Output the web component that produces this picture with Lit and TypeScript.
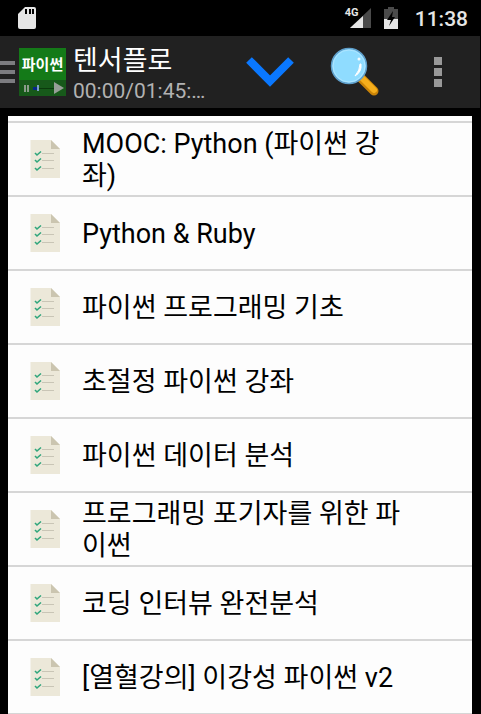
import { LitElement, html, css, svg } from "lit";
import { customElement, property } from "lit/decorators.js";

const fontStack = css`Roboto, "Noto Sans CJK KR", sans-serif`;

@customElement("status-bar")
class StatusBar extends LitElement {
  static styles = css`
    :host {
      display: flex;
      align-items: center;
      height: 36px;
      padding: 0 13px 0 18px;
      box-sizing: border-box;
      background: #000;
      color: #e6e6e6;
      font-family: ${fontStack};
    }
    .spacer {
      flex: 1;
    }
    .network {
      display: flex;
      align-items: flex-start;
      height: 22px;
    }
    .label {
      font-size: 11px;
      line-height: 12px;
      font-weight: 700;
      width: 5px;
      white-space: nowrap;
    }
    .battery {
      margin: 0 17px 0 13px;
    }
    .time {
      padding-top: 2px;
      font-size: 21px;
      line-height: 34px;
      font-weight: 500;
    }
    svg {
      display: block;
    }
  `;

  render() {
    return html`
      <svg width="18" height="22" viewBox="0 0 18 22" aria-hidden="true">
        <path d="M7 0H16Q18 0 18 2V20Q18 22 16 22H2Q0 22 0 20V7Z" fill="#e6e6e6" />
        <path d="M7 2h2v5h-2zM11 2h2v5h-2zM14 2h2v5h-2z" fill="#000" />
      </svg>
      <span class="spacer"></span>
      <span class="network">
        <span class="label">4G</span>
        <svg width="21" height="22" viewBox="0 0 21 22" aria-hidden="true">
          <path d="M21 1V21H0Z" fill="#4a4a4a" />
          <path d="M13 9V21H0Z" fill="#e6e6e6" />
        </svg>
      </span>
      <svg class="battery" width="14" height="22" viewBox="0 0 14 22" aria-hidden="true">
        <path d="M4 0h6v2h4v20H0V2h4z" fill="#4a4a4a" />
        <path d="M0 12h14v10H0z" fill="#e6e6e6" />
        <path d="M9 4L3 13h4l-2 6l6-9H8z" fill="#000" />
      </svg>
      <span class="time">11:38</span>
    `;
  }
}

@customElement("player-bar")
class PlayerBar extends LitElement {
  @property() heading = "";
  @property() progress = "";

  static styles = css`
    :host {
      display: flex;
      align-items: center;
      height: 72px;
      margin-right: 1px;
      padding-right: 26px;
      box-sizing: border-box;
      background: #212121;
      font-family: ${fontStack};
    }
    button {
      display: flex;
      padding: 0;
      border: 0;
      background: none;
      cursor: pointer;
    }
    svg {
      display: block;
    }
    .cover {
      display: flex;
      flex-direction: column;
      width: 47px;
      height: 48px;
      margin: 0 7px 0 4px;
      background: #147a18;
    }
    .cover-title {
      height: 32px;
      color: #fff;
      font-size: 15px;
      line-height: 34px;
      font-weight: 700;
      text-align: center;
      white-space: nowrap;
    }
    .info {
      width: 136px;
      padding-top: 4px;
      white-space: nowrap;
    }
    h1 {
      margin: 0;
      color: #fff;
      font-size: 27px;
      line-height: 34px;
      font-weight: 400;
    }
    .progress {
      color: #b2b2b2;
      font-size: 21px;
      line-height: 26px;
    }
    .actions {
      display: flex;
      flex: 1;
      align-items: center;
      justify-content: space-between;
      margin-left: 37px;
    }
    .more {
      padding: 0 12px 0 18px;
    }
  `;

  render() {
    return html`
      <button aria-label="메뉴">
        <svg width="15" height="24" viewBox="0 0 15 24">
          <path d="M0 1h15v4H0zM0 10h15v4H0zM0 19h15v4H0z" fill="#7c7c80" />
        </svg>
      </button>
      <div class="cover">
        <span class="cover-title">파이썬</span>
        <svg width="47" height="16" viewBox="0 0 47 16" aria-hidden="true">
          <path d="M0 0h47v16H0z" fill="#17591a" />
          <path d="M5 5h2v7h-2zM8 5h2v7h-2z" fill="#8b9b8b" />
          <path d="M14 8h21v1H14z" fill="#0b3a0c" />
          <path d="M14 7h5v3h-5z" fill="#06268c" />
          <path d="M18 5h2v6h-2z" fill="#7b9fc4" />
          <path d="M35 2L45 8L35 14Z" fill="#979e97" />
        </svg>
      </div>
      <div class="info">
        <h1>${this.heading}</h1>
        <div class="progress">${this.progress}</div>
      </div>
      <div class="actions">
        <button aria-label="펼치기">
          <svg width="48" height="30" viewBox="0 0 48 30">
            <path d="M3 3L24 24L45 3" fill="none" stroke="#0a78ff" stroke-width="8" />
          </svg>
        </button>
        <button aria-label="검색">
          <svg width="50" height="50" viewBox="0 0 50 50">
            <path d="M31 31L44 44" stroke="#c98308" stroke-width="9" stroke-linecap="round" />
            <path d="M31 30L44 43" stroke="#f5ae1c" stroke-width="6" stroke-linecap="round" />
            <circle cx="19" cy="19" r="17.5" fill="#8fdcff" stroke="#5f9fcb" stroke-width="1.5" />
            <circle cx="19" cy="19" r="16" fill="none" stroke="#b0e6ff" stroke-width="1" />
            <path d="M31 17Q32 25 25 29Q30 23 30 17Z" fill="#fff" stroke="#fff" />
            <circle cx="29" cy="12" r="1.5" fill="#f2fcff" />
          </svg>
        </button>
        <button class="more" aria-label="더보기">
          <svg width="8" height="30" viewBox="0 0 8 30">
            <path d="M0 0h8v8H0zM0 11h8v8H0zM0 22h8v8H0z" fill="#999" />
          </svg>
        </button>
      </div>
    `;
  }
}

const checkLine = (y: number) => svg`
  <path d=${`M5 ${y}l2 2l4 -3.5`} fill="none" stroke="#30a67c" stroke-width="1.6" />
  <path d=${`M12 ${y + 0.5}h12`} stroke="#c9c5b6" stroke-width="1" />
`;

@customElement("course-list")
class CourseList extends LitElement {
  @property({ attribute: false }) courses: string[] = [];

  static styles = css`
    :host {
      display: block;
      box-sizing: border-box;
      padding-top: 5px;
      background: #fdfdfd;
      overflow-y: auto;
      scrollbar-width: none;
      font-family: ${fontStack};
    }
    ul {
      margin: 0;
      padding: 0;
      list-style: none;
      border-top: 2px solid #d6d6d6;
    }
    li {
      border-bottom: 2px solid #d6d6d6;
    }
    button {
      display: flex;
      align-items: center;
      gap: 22px;
      width: 100%;
      min-height: 72px;
      padding: 0 66px 0 22px;
      border: 0;
      background: none;
      color: #000;
      font: inherit;
      font-size: 27px;
      line-height: 32px;
      text-align: left;
      word-break: break-all;
      cursor: pointer;
    }
    .name {
      padding-top: 2px;
    }
    svg {
      display: block;
      flex: none;
    }
  `;

  render() {
    return html`
      <ul>
        ${this.courses.map(
          (name) => html`
            <li>
              <button>
                <svg width="30" height="38" viewBox="0 0 30 38" aria-hidden="true">
                  <path d="M0.5 0H21L30 9V38H0.5Z" fill="#ece8d9" />
                  <path d="M21 0L30 9H21Z" fill="#cbc5b0" />
                  ${[13, 20, 28].map(checkLine)}
                </svg>
                <span class="name">${name}</span>
              </button>
            </li>
          `
        )}
      </ul>
    `;
  }
}

@customElement("app-root")
class AppRoot extends LitElement {
  static styles = css`
    :host {
      display: flex;
      flex-direction: column;
      height: 100vh;
      background: #000;
    }
    status-bar,
    player-bar {
      flex: none;
    }
    course-list {
      flex: 1;
      min-height: 0;
      margin: 8px 9px 0 8px;
    }
  `;

  private courses = [
    "MOOC: Python (파이썬 강좌)",
    "Python & Ruby",
    "파이썬 프로그래밍 기초",
    "초절정 파이썬 강좌",
    "파이썬 데이터 분석",
    "프로그래밍 포기자를 위한 파이썬",
    "코딩 인터뷰 완전분석",
    "[열혈강의] 이강성 파이썬 v2",
  ];

  render() {
    return html`
      <status-bar></status-bar>
      <player-bar heading="텐서플로" progress="00:00/01:45:…"></player-bar>
      <course-list .courses=${this.courses}></course-list>
    `;
  }
}
